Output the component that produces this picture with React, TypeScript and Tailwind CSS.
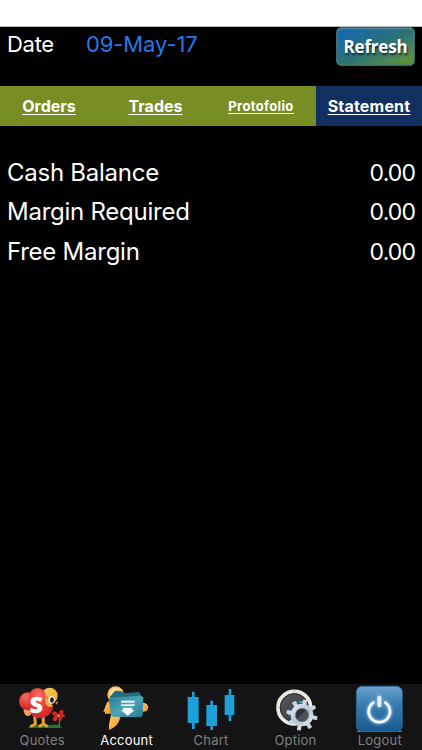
import React, { useState } from 'react';

const QuotesIcon = () => (
    <svg className="w-[84px] h-12" viewBox="0 12 252 144">
        <defs>
            <radialGradient id="quotes-body" cx="40%" cy="25%" r="80%">
                <stop offset="0" stopColor="#f5705f" />
                <stop offset="0.55" stopColor="#e23a35" />
                <stop offset="1" stopColor="#c4262a" />
            </radialGradient>
            <linearGradient id="quotes-head" x1="0" y1="0" x2="1" y2="1">
                <stop offset="0" stopColor="#f6c95c" />
                <stop offset="1" stopColor="#f0a83a" />
            </linearGradient>
        </defs>
        <path d="M84 144 L90 134 H178 L185 144Z" fill="#28702f" />
        <path d="M104 106 l2 26 -11 6 M129 106 l1 26 M130 132 l-10 6 M130 132 l10 6" stroke="#e9a03a" strokeWidth="9" fill="none" strokeLinecap="round" />
        <circle cx="149" cy="47" r="24" fill="url(#quotes-head)" />
        <ellipse cx="84" cy="91" rx="13" ry="17" fill="#f0a64a" />
        <ellipse cx="84" cy="64" rx="27" ry="27" fill="url(#quotes-body)" />
        <path d="M88 44 C94 18 130 20 136 40 C144 60 164 72 158 88 C152 106 134 115 116 115 C100 114 90 102 88 88Z" fill="url(#quotes-body)" />
        <path d="M136 40 C140 56 150 68 158 78 C152 84 142 82 136 70Z" fill="#f0ad45" />
        <ellipse cx="155" cy="60" rx="10" ry="11" fill="#f8f5e2" />
        <ellipse cx="156" cy="60" rx="6" ry="8" fill="#28221e" />
        <path d="M165 68 L173 63 L172 74Z" fill="#e78b20" />
        <text x="109" y="98" textAnchor="middle" fontSize="68" fontWeight="800" fill="#fff" stroke="#fff" strokeWidth="1" fontFamily="'Open Sans', sans-serif">S</text>
        <path d="M178 112 V138" stroke="#2e8637" strokeWidth="4" />
        <g fill="#d92523">
            <ellipse cx="165" cy="101" rx="9" ry="6" transform="rotate(25 165 101)" />
            <ellipse cx="184" cy="97" rx="6" ry="8" transform="rotate(30 184 97)" />
            <ellipse cx="188" cy="107" rx="7" ry="5" />
            <ellipse cx="166" cy="115" rx="7" ry="9" transform="rotate(35 166 115)" />
            <ellipse cx="181" cy="116" rx="5" ry="7" />
        </g>
        <circle cx="176" cy="107" r="4" fill="#f49d31" />
    </svg>
);

const AccountIcon = () => (
    <svg className="w-[84px] h-12" viewBox="0 12 252 144">
        <defs>
            <linearGradient id="account-folder" x1="0" y1="0" x2="1" y2="1">
                <stop offset="0" stopColor="#287b91" />
                <stop offset="0.5" stopColor="#4aa5b6" />
                <stop offset="1" stopColor="#23798c" />
            </linearGradient>
            <linearGradient id="account-body" x1="0" y1="0" x2="1" y2="1">
                <stop offset="0" stopColor="#ffcb6b" />
                <stop offset="1" stopColor="#ef9722" />
            </linearGradient>
        </defs>
        <g transform="translate(-2 0)">
            <circle cx="94" cy="44" r="25" fill="url(#account-body)" />
            <path d="M74 39 C80 22 105 19 115 32 C99 27 86 34 81 51Z" fill="#ffdda0" />
            <path d="M68 67 L84 58 V101 H62 V95 H57Z" fill="url(#account-body)" />
            <path d="M80 103 H110 C106 130 94 142 75 150 C71 138 78 120 80 103Z" fill="url(#account-body)" />
            <path d="M174 68 C188 67 195 79 191 86 C189 94 180 97 170 94Z" fill="url(#account-body)" />
            <path d="M77 50 L92 32 L112 34 L117 40 L164 36 L170 44 V60 H80Z" fill="#216d82" />
            <path d="M73 56 L170 48 C176 49 178 52 177 59 L175 104 C174 110 170 112 165 112 L88 110 C83 110 80 108 80 103Z" fill="url(#account-folder)" />
            <path d="M73 56 L170 48" stroke="#56a5b5" strokeWidth="2" />
            <g fill="#f2fbfc">
                <path d="M110 62 H151 V68 H110Z" />
                <path d="M110 73 H151 V78 H110Z" />
                <path d="M116 83 H144 V91 H151 L130 107 L110 91 H116Z" />
            </g>
        </g>
    </svg>
);

const ChartIcon = () => (
    <svg className="w-[84px] h-12" viewBox="0 12 252 144">
        <g fill="#1e9fd8" transform="translate(-2 0)">
            <path d="M71 35 H79 V51 H91 V129 H79 V147 H71 V129 H58 V51 H71Z" />
            <path d="M126 62 H134 V75 H146 V138 H134 V150 H126 V138 H114 V75 H126Z" />
            <path d="M181 27 H189 V45 H198 V105 H189 V123 H181 V105 H169 V45 H181Z" />
        </g>
    </svg>
);

const OptionIcon = () => (
    <svg className="w-[84px] h-12" viewBox="0 12 252 144">
        <defs>
            <linearGradient id="option-gear" x1="0" y1="0" x2="1" y2="1">
                <stop offset="0" stopColor="#dce8f1" />
                <stop offset="0.55" stopColor="#b5c4d2" />
                <stop offset="1" stopColor="#dce5ed" />
            </linearGradient>
            <linearGradient id="option-dial" x1="0" y1="0" x2="1" y2="1">
                <stop offset="0" stopColor="#585b60" />
                <stop offset="1" stopColor="#33383e" />
            </linearGradient>
        </defs>
        <g transform="translate(-4 0)">
            <circle cx="128" cy="83" r="49" fill="url(#option-dial)" stroke="#eeeae1" strokeWidth="11" />
            <circle cx="128" cy="83" r="42" fill="none" stroke="#2b2c2f" strokeWidth="3" />
            <path d="M128 30 v8 M75 83 h8" stroke="#aaa79f" strokeWidth="2" />
            <path d="M128 67 h9 M143 66 h12 M112 98 v8" stroke="#39a4c0" strokeWidth="6" />
            <g transform="translate(151 105)">
                <g fill="#cbd7e2">
                    {[12, 57, 102, 147, 192, 237, 282, 327].map((angle) => (
                        <rect key={angle} x="-6" y="-47" width="12" height="16" rx="2" transform={`rotate(${angle})`} />
                    ))}
                </g>
                <circle r="27" fill="#464b52" stroke="url(#option-gear)" strokeWidth="14" />
                <circle r="20" fill="#30343b" stroke="#8693a0" strokeWidth="2" />
                <path d="M-15 12 L12 -16 A20 20 0 0 1 5 19 A20 20 0 0 1 -15 12" fill="#60666d" opacity="0.6" />
            </g>
        </g>
    </svg>
);

const LogoutIcon = () => (
    <svg className="w-[84px] h-12" viewBox="0 12 252 144">
        <defs>
            <linearGradient id="logout-bg" x1="0" y1="0" x2="0" y2="1">
                <stop offset="0" stopColor="#6ba1cd" />
                <stop offset="0.4" stopColor="#397daf" />
                <stop offset="1" stopColor="#19588d" />
            </linearGradient>
            <filter id="logout-glow" x="-30%" y="-30%" width="160%" height="160%">
                <feGaussianBlur stdDeviation="4" />
            </filter>
        </defs>
        <path d="M54 156 L66 150 H184 L194 156Z" fill="#76818a" />
        <rect x="55" y="19" width="138" height="136" rx="17" fill="url(#logout-bg)" stroke="#316d9f" strokeWidth="2" />
        <g fill="none" strokeLinecap="round">
            <path d="M106 68 A32 32 0 1 0 142 68 M124 51 V78" stroke="#a6d7f7" strokeWidth="13" opacity="0.7" filter="url(#logout-glow)" />
            <path d="M106 68 A32 32 0 1 0 142 68" stroke="#fff" strokeWidth="8" />
            <path d="M124 53 V76" stroke="#e4f0f8" strokeWidth="12" />
        </g>
    </svg>
);

const accountTabs = [
    { name: 'Orders', style: 'w-[98px] text-base' },
    { name: 'Trades', style: 'w-[115px] text-base' },
    { name: 'Protofolio', style: 'flex-1 pr-[7px] pt-px text-[13px] tracking-[0.35px]' },
    { name: 'Statement', style: 'w-[106px] text-base tracking-[0.2px]' },
];

const balances = [
    { label: 'Cash Balance', value: '0.00' },
    { label: 'Margin Required', value: '0.00' },
    { label: 'Free Margin', value: '0.00' },
];

const navItems = [
    { name: 'Quotes', icon: QuotesIcon },
    { name: 'Account', icon: AccountIcon },
    { name: 'Chart', icon: ChartIcon },
    { name: 'Option', icon: OptionIcon },
    { name: 'Logout', icon: LogoutIcon },
];

const App = () => {
    const [activeTab, setActiveTab] = useState('Statement');
    const [activePage, setActivePage] = useState('Account');

    return (
        <div className="w-full h-screen flex flex-col bg-black text-white font-['Inter',sans-serif] overflow-hidden">
            <div className="h-[27px] shrink-0 bg-white border-b border-[#b8b8b8]" />
            <header className="h-[59px] shrink-0 flex items-start pl-[7px] pr-[7px]">
                <span className="w-[79px] pt-[3px] text-[22px] leading-7 tracking-[-0.3px]">Date</span>
                <span className="pt-[3px] text-[22px] leading-7 tracking-[-0.1px] text-[#2479e8]">09-May-17</span>
                <button className="ml-auto w-[79px] h-[39px] rounded-[5px] border border-[#3f6672] bg-linear-to-br from-[#1a68a6] from-15% via-[#2a7076] to-[#5c9038] to-90% text-[17px] leading-none tracking-[-0.2px] font-bold font-['Open_Sans',sans-serif] [text-shadow:1px_2px_2px_#102d35] shadow-[inset_0_1px_2px_#5b8f98,inset_0_-1px_2px_#427b60]">
                    Refresh
                </button>
            </header>
            <nav className="h-10 shrink-0 flex">
                {accountTabs.map((tab) => (
                    <button
                        key={tab.name}
                        onClick={() => setActiveTab(tab.name)}
                        className={`${tab.style} font-bold underline underline-offset-2 decoration-1 ${activeTab === tab.name ? 'bg-[#12305f]' : 'bg-[#778e25]'}`}
                    >
                        {tab.name}
                    </button>
                ))}
            </nav>
            <main className="flex-1 pt-[27px] px-[7px]">
                {balances.map((row) => (
                    <div key={row.label} className="h-[39.5px] flex items-center justify-between text-2xl">
                        <span className="tracking-[-0.25px]">{row.label}</span>
                        <span className="pt-px text-[23px] tracking-[-0.9px]">{row.value}</span>
                    </div>
                ))}
            </main>
            <footer className="h-[66px] shrink-0 flex bg-[#141414]">
                {navItems.map(({ name, icon: Icon }) => (
                    <button
                        key={name}
                        onClick={() => setActivePage(name)}
                        className={`flex-1 flex flex-col items-center text-[13px] leading-4 tracking-[0.2px] ${activePage === name ? 'text-white' : 'text-[#808080]'}`}
                    >
                        <Icon />
                        <span>{name}</span>
                    </button>
                ))}
            </footer>
        </div>
    );
};

export default App;
